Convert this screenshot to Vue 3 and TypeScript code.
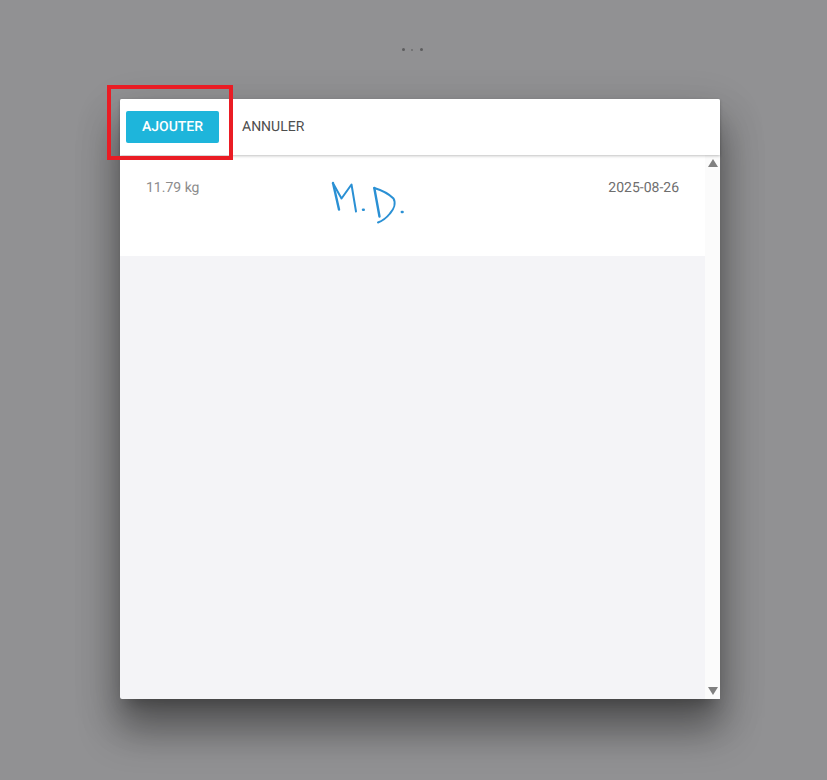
<script setup lang="ts">
const items: { weight: string; date: string }[] = [{ weight: '11.79 kg', date: '2025-08-26' }]
</script>

<template>
  <div class="page">
    <div class="dots">
      <span class="dot"></span>
      <span class="dot small"></span>
      <span class="dot"></span>
    </div>
    <section class="modal">
      <header class="toolbar">
        <button class="btn primary">AJOUTER</button>
        <button class="btn plain">ANNULER</button>
      </header>
      <div class="body">
        <div class="list">
          <div v-for="item in items" :key="item.date" class="row">
            <span class="weight">{{ item.weight }}</span>
            <svg class="signature" width="90" height="60" viewBox="0 0 90 60" fill="none" stroke="#2a90d4" stroke-width="2" stroke-linecap="round" stroke-linejoin="round">
              <path d="M2 3 L8 29.500" stroke-width="2.400" />
              <path d="M3 5 L10.500 18.500 L20.500 4.500 L25 31.500" />
              <path d="M32 29.800 L32.800 29.800" stroke-width="2.400" />
              <path d="M43.300 8 L48.500 36.500" stroke-width="2.400" />
              <path d="M43.300 8 C50 10 57 13 62.500 18.500 C65 23 63 29 59 33.500 C55 38.500 51 41 47 42.500" />
              <path d="M70.800 32 L71.600 32" stroke-width="2.400" />
            </svg>
            <span class="date">{{ item.date }}</span>
          </div>
        </div>
        <div class="scrollbar">
          <span class="arrow up"></span>
          <span class="arrow down"></span>
        </div>
      </div>
      <div class="highlight"></div>
    </section>
  </div>
</template>

<style>
html,
body {
  margin: 0;
  background: #919193;
}
</style>

<style scoped>
.page {
  box-sizing: border-box;
  width: 827px;
  height: 780px;
  padding-top: 47px;
  background: #919193;
  font-family: Roboto, "Liberation Sans", sans-serif;
  text-rendering: geometricPrecision;
  overflow: hidden;
}

.dots {
  display: flex;
  align-items: center;
  justify-content: center;
  gap: 6px;
  height: 5px;
  margin-left: -3px;
  margin-bottom: 47px;
}

.dot {
  width: 3px;
  height: 3px;
  border-radius: 50%;
  background: #5d5d5e;
}

.dot.small {
  width: 2px;
  height: 2px;
  margin: 0 0.5px;
  background: #6c6c6d;
}

.modal {
  position: relative;
  display: flex;
  flex-direction: column;
  width: 600px;
  height: 600px;
  margin-left: 120px;
  background: #f4f4f7;
  border-radius: 2px;
  box-shadow:
    0 30px 38px 2px rgba(0, 0, 0, 0.34),
    0 16px 46px 4px rgba(0, 0, 0, 0.14),
    0 11px 15px -7px rgba(0, 0, 0, 0.25);
}

.toolbar {
  position: relative;
  z-index: 1;
  display: flex;
  align-items: center;
  gap: 7px;
  flex: none;
  box-sizing: border-box;
  height: 56px;
  padding: 0 6px;
  background: #fff;
  border-radius: 2px 2px 0 0;
  box-shadow: 0 1px 3px rgba(0, 0, 0, 0.25);
}

.btn {
  box-sizing: border-box;
  height: 32px;
  border: 0;
  border-radius: 2px;
  font: 400 14px/32px Roboto, "Liberation Sans", sans-serif;
  text-rendering: geometricPrecision;
  padding: 0 16px;
  cursor: pointer;
}

.primary {
  width: 93px;
  padding: 0;
  background: #1eb5db;
  color: #fff;
  font-weight: 500;
}

.plain {
  background: transparent;
  color: #4d4d4d;
}

.body {
  display: flex;
  flex: 1;
  min-height: 0;
}

.list {
  flex: 1;
  min-width: 0;
}

.row {
  position: relative;
  box-sizing: border-box;
  display: flex;
  justify-content: space-between;
  height: 101px;
  padding: 25px 26px 0;
  background: #fff;
  font-size: 14px;
  line-height: 16px;
}

.weight {
  color: #8c8c8c;
}

.date {
  color: #6e6e6e;
}

.signature {
  position: absolute;
  left: 211px;
  top: 25px;
}

.scrollbar {
  display: flex;
  flex-direction: column;
  justify-content: space-between;
  align-items: center;
  flex: none;
  box-sizing: border-box;
  width: 15px;
  padding: 4px 0;
  background: #fbfbfb;
}

.arrow {
  width: 0;
  height: 0;
  border-left: 5px solid transparent;
  border-right: 5px solid transparent;
}

.arrow.up {
  border-bottom: 8px solid #808080;
}

.arrow.down {
  border-top: 8px solid #808080;
}

.highlight {
  position: absolute;
  z-index: 2;
  left: -13px;
  top: -14px;
  width: 126px;
  height: 75px;
  box-sizing: border-box;
  border: 4px solid #ea1c24;
  pointer-events: none;
}
</style>
